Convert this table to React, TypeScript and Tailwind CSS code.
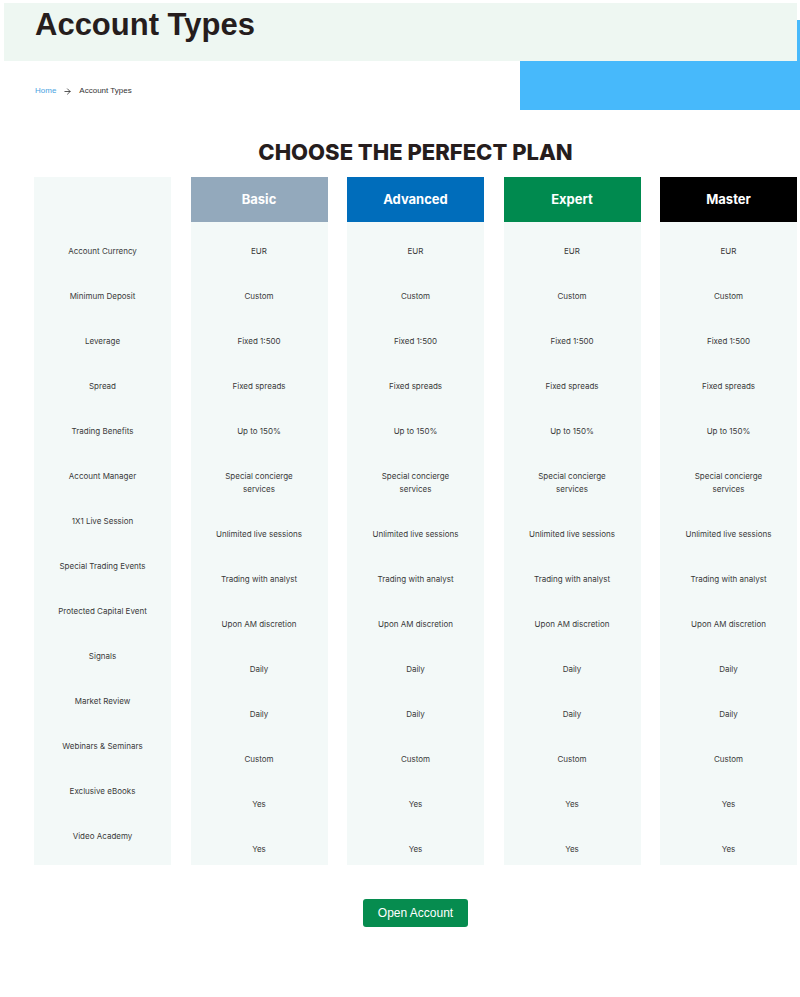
import React from "react";
import { ArrowRight } from "lucide-react";

const features = [
  "Account Currency",
  "Minimum Deposit",
  "Leverage",
  "Spread",
  "Trading Benefits",
  "Account Manager",
  "1X1 Live Session",
  "Special Trading Events",
  "Protected Capital Event",
  "Signals",
  "Market Review",
  "Webinars & Seminars",
  "Exclusive eBooks",
  "Video Academy",
];

const values = [
  "EUR",
  "Custom",
  "Fixed 1:500",
  "Fixed spreads",
  "Up to 150%",
  "Special concierge\nservices",
  "Unlimited live sessions",
  "Trading with analyst",
  "Upon AM discretion",
  "Daily",
  "Daily",
  "Custom",
  "Yes",
  "Yes",
];

const plans = [
  { name: "Basic", color: "bg-[#93a9bc]" },
  { name: "Advanced", color: "bg-[#006dbb]" },
  { name: "Expert", color: "bg-[#008a4f]" },
  { name: "Master", color: "bg-[#000000]" },
];

const Cell = ({ text }: { text: string }) => (
  <div className="pt-[23px] pb-[9px] px-2 text-center text-[8px] leading-[13px] text-[#3a3a3a] whitespace-pre-line">
    {text}
  </div>
);

export default function App() {
  return (
    <div
      className="relative min-h-[997px] w-[800px] bg-white overflow-hidden"
      style={{ fontFamily: "Inter, 'Noto Sans', sans-serif" }}
    >
      {/* blue decoration behind the title band */}
      <div className="absolute left-[520px] top-[20px] w-[280px] h-[90px] bg-[#47b9fb]" />

      <div className="relative ml-[4px] mr-[3px] mt-[3px] h-[58px] bg-[#eef7f2] pl-[31px] pt-[6px]">
        <h1
          className="text-[31px] leading-[32px] font-bold text-[#261d1d]"
          style={{ fontFamily: "'Liberation Sans', Arial, sans-serif" }}
        >
          Account Types
        </h1>
      </div>

      <div
        className="relative flex items-center gap-[6px] pl-[35px] mt-[25px] text-[8px] leading-[10px]"
        style={{ fontFamily: "'Liberation Sans', Arial, sans-serif" }}
      >
        <span className="text-[#4aa3df]">Home</span>
        <ArrowRight size={9} strokeWidth={2} className="text-[#222] mx-[1px]" />
        <span className="text-[#333]">Account Types</span>
      </div>

      <h2 className="mt-[43px] ml-[34px] w-[763px] text-center text-[22px] leading-[26px] font-extrabold text-[#261d1d]">
        CHOOSE THE PERFECT PLAN
      </h2>

      <div className="mt-[12px] ml-[34px] w-[763px] grid grid-cols-5 gap-x-[19.5px] items-stretch">
        <div className="bg-[#f3f9f8] flex flex-col">
          <div className="h-[45px]" />
          {features.map((f) => (
            <Cell key={f} text={f} />
          ))}
        </div>
        {plans.map((p) => (
          <div key={p.name} className="bg-[#f3f9f8] flex flex-col">
            <div
              className={`${p.color} h-[45px] flex items-center justify-center text-white text-[13px] font-bold`}
            >
              {p.name}
            </div>
            {values.map((v, i) => (
              <Cell key={i} text={v} />
            ))}
          </div>
        ))}
      </div>

      <div className="flex justify-center mt-[34px] ml-[34px] w-[763px]">
        <button
          className="h-[28px] w-[105px] rounded-[3px] bg-[#068c4f] text-white text-[12px]"
          style={{ fontFamily: "'Liberation Sans', Arial, sans-serif" }}
        >
          Open Account
        </button>
      </div>
    </div>
  );
}
